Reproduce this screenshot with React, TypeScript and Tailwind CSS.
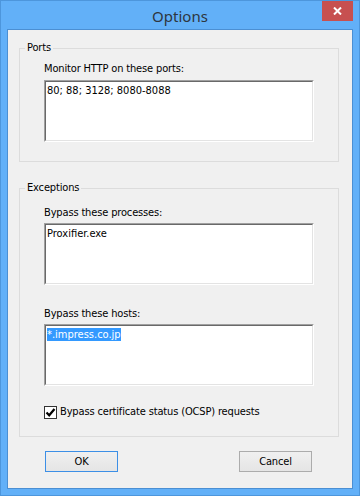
import React from "react";

const uiFont = { fontFamily: '"DejaVu Sans Condensed", "Liberation Sans", sans-serif' };
const titleFont = { fontFamily: '"Noto Sans", "Open Sans", sans-serif' };

function TextBox({ children }: { children?: React.ReactNode }) {
  return (
    <div className="h-[62px] w-full border-t border-l border-t-[#a0a0a0] border-l-[#a0a0a0] border-r border-b border-r-white border-b-white">
      <div className="h-full w-full border-t border-l border-t-[#696969] border-l-[#696969] border-r border-b border-r-[#e3e3e3] border-b-[#e3e3e3] bg-white pl-[1px] pt-[1px] text-[11px] leading-[16px] tracking-normal text-black">
        {children}
      </div>
    </div>
  );
}

export default function App() {
  return (
    <div
      className="w-[360px] h-[496px] border border-[#4d96dc] bg-[#62b0f8] flex flex-col px-[6px] pb-[6px] tracking-[-0.15px]"
      style={uiFont}
    >
      <div className="relative h-[28px] flex items-start justify-center">
        <span className="mt-[4px] text-[15px] leading-[22px] tracking-normal text-[#2e3640]" style={titleFont}>
          Options
        </span>
        <button className="absolute right-[0px] top-0 w-[31px] h-[20px] bg-[#c75050] flex items-center justify-center">
          <svg width="9" height="8" viewBox="0 0 9 8">
            <path d="M1 0.5 L8 7.5 M8 0.5 L1 7.5" stroke="white" strokeWidth="2" />
          </svg>
        </button>
      </div>
      <div className="flex-1 border border-[#4b8fd3] bg-[#f0f0f0] flex flex-col">
        <fieldset className="mt-[10px] ml-[11px] mr-[13px] border border-[#dcdcdc] px-0 pb-[19px]">
          <legend className="ml-[5px] px-[2px] text-[11px] leading-[16px] text-black">Ports</legend>
          <div className="px-[24px]">
            <div className="mt-[5px] text-[11px] leading-[16px] text-black">Monitor HTTP on these ports:</div>
            <div className="mt-[3px]">
              <TextBox>80; 88; 3128; 8080-8088</TextBox>
            </div>
          </div>
        </fieldset>
        <fieldset className="mt-[18px] ml-[11px] mr-[13px] border border-[#dcdcdc] px-0 pb-[17px]">
          <legend className="ml-[5px] px-[2px] text-[11px] leading-[16px] text-black">Exceptions</legend>
          <div className="px-[24px]">
            <div className="mt-[9px] text-[11px] leading-[16px] text-black">Bypass these processes:</div>
            <div className="mt-[2px]">
              <TextBox>Proxifier.exe</TextBox>
            </div>
            <div className="mt-[21px] text-[11px] leading-[16px] text-black">Bypass these hosts:</div>
            <div className="mt-[2px]">
              <TextBox>
                <span className="inline-block h-[13px] leading-[13px] bg-[#3399ff] text-white">*.impress.co.jp</span>
              </TextBox>
            </div>
            <label className="mt-[19px] h-[14px] flex items-center gap-[3px] text-[11px] leading-[14px] text-black">
              <svg width="13" height="13" viewBox="0 0 13 13" className="shrink-0">
                <rect x="0.5" y="0.5" width="12" height="12" fill="white" stroke="#333333" />
                <path d="M2.5 6.5 L5.2 9.3 L10.5 3" fill="none" stroke="#000" strokeWidth="2.2" />
              </svg>
              <span>Bypass certificate status (OCSP) requests</span>
            </label>
          </div>
        </fieldset>
        <div className="mt-[14px] flex justify-between pl-[37px] pr-[40px]">
          <button className="w-[73px] h-[21px] border border-[#3c8fe6] bg-gradient-to-b from-[#f0f0f0] to-[#e5e5e5] text-[11px] leading-[16px] text-black">
            OK
          </button>
          <button className="w-[73px] h-[21px] border border-[#acacac] bg-gradient-to-b from-[#f0f0f0] to-[#e5e5e5] text-[11px] leading-[16px] text-black">
            Cancel
          </button>
        </div>
      </div>
    </div>
  );
}
